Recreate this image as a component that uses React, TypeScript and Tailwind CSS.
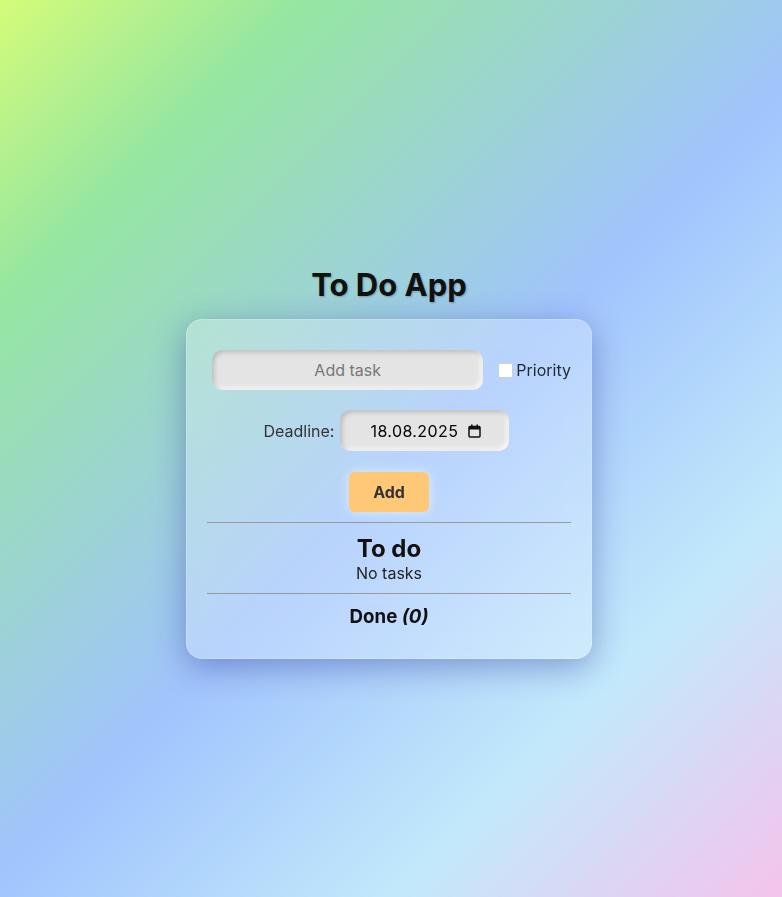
export default function App() {
  return (
    <div className="min-h-screen w-full flex flex-col items-center pt-[265px] pr-[4px] bg-[linear-gradient(135deg,#d4fc79_0%,#96e6a1_18%,#a1c4fd_52%,#c2e9fb_77%,#f5c3ec_100%)] font-['Inter',sans-serif]">
      <h1 className="text-[31px] leading-[40px] font-bold text-[#111] [text-shadow:1px_1px_2px_rgba(0,0,0,0.25)]">
        To Do App
      </h1>

      <div className="mt-[14px] w-[406px] rounded-2xl border border-white/20 bg-white/25 backdrop-blur-md shadow-[0_8px_32px_rgba(31,38,135,0.37)] px-[20px] pt-[30px] pb-[30px] flex flex-col items-center">
        {/* new task row */}
        <div className="flex items-center justify-center w-full pl-[5px]">
          <input
            type="text"
            placeholder="Add task"
            className="w-[272px] h-10 rounded-[10px] bg-[#e4e4e4] text-center text-base text-[#222] placeholder:text-[#777] outline-none shadow-[inset_2px_2px_5px_rgba(0,0,0,0.2),inset_-2px_-2px_5px_rgba(255,255,255,0.9)]"
          />
          <label className="ml-[15px] flex items-center gap-[3px] text-base text-[#1f2937]">
            <input
              type="checkbox"
              className="appearance-none w-[15px] h-[15px] bg-white border border-[#cfcfcf] rounded-[2px]"
            />
            Priority
          </label>
        </div>

        {/* deadline row */}
        <div className="mt-5 flex items-center justify-center gap-[6px] pr-[5px]">
          <span className="text-base text-[#333]">Deadline:</span>
          <div className="w-[169px] h-[41px] rounded-[10px] bg-[#e4e4e4] flex items-center justify-center gap-[9px] pl-[2px] shadow-[inset_2px_2px_5px_rgba(0,0,0,0.2),inset_-2px_-2px_5px_rgba(255,255,255,0.9)]">
            <input
              type="text"
              readOnly
              value="18.08.2025"
              className="w-[89px] bg-transparent text-base tracking-[0.4px] text-black outline-none"
            />
            <svg width="13" height="14" viewBox="0 0 13 14" fill="none">
              <rect x="1" y="2.5" width="11" height="10.5" rx="1" stroke="#111" strokeWidth="1.5" />
              <rect x="1" y="2.5" width="11" height="3" fill="#111" />
              <rect x="3" y="0.5" width="1.6" height="2.5" fill="#111" />
              <rect x="8.4" y="0.5" width="1.6" height="2.5" fill="#111" />
            </svg>
          </div>
        </div>

        <button className="mt-[21px] w-20 h-10 rounded-md bg-[#ffc877] text-base font-bold text-[#333] shadow-[0_0_12px_rgba(255,255,255,0.6)]">
          Add
        </button>

        <hr className="mt-[10px] w-full border-0 border-t border-[#9a9a9a]" />

        <section className="mt-[11px] flex flex-col items-center">
          <h2 className="text-2xl leading-[29px] font-bold text-[#111]">To do</h2>
          <p className="text-base leading-5 text-[#222]">No tasks</p>
        </section>

        <hr className="mt-[10px] w-full border-0 border-t border-[#9a9a9a]" />

        <h3 className="mt-[12px] text-[18.7px] leading-[22px] font-bold text-[#111]">
          Done <em>(0)</em>
        </h3>
      </div>
    </div>
  );
}
